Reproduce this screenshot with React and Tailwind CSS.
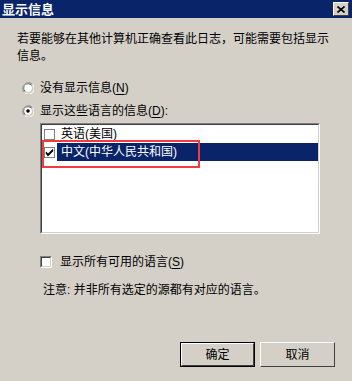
import React from 'react'

const cjk = { fontFamily: '"Liberation Sans", "Noto Sans CJK SC", sans-serif' }

const Radio = ({ checked }) => (
  <svg width="12" height="12" viewBox="0 0 12 12" className="shrink-0">
    <path d="M10.5 2.5 A5.5 5.5 0 0 0 2.5 10.5" fill="none" stroke="#808080" strokeWidth="1" />
    <path d="M9.6 3.4 A4.3 4.3 0 0 0 3.4 9.6" fill="none" stroke="#404040" strokeWidth="1" />
    <path d="M10.5 2.5 A5.5 5.5 0 0 1 2.5 10.5" fill="none" stroke="#ffffff" strokeWidth="1" />
    <path d="M9.6 3.4 A4.3 4.3 0 0 1 3.4 9.6" fill="none" stroke="#d4d0c8" strokeWidth="1" />
    <circle cx="6" cy="6" r="3.8" fill="#ffffff" />
    {checked && <circle cx="6" cy="6" r="1.8" fill="#000000" />}
  </svg>
)

const Check = () => (
  <svg width="9" height="9" viewBox="0 0 9 9">
    <path d="M1 4 L3 6.5 L8 1.5 M1 5 L3 7.5 L8 2.5" fill="none" stroke="#000" strokeWidth="1.2" />
  </svg>
)

const U = ({ children }) => <span className="underline underline-offset-2">{children}</span>

const Button = ({ children, primary }) => (
  <div className={primary ? 'border border-black' : ''}>
    <div
      className={
        'flex items-center justify-center border border-t-white border-l-white border-r-[#404040] border-b-[#404040] bg-[#d4d0c8] text-[12px] text-black ' +
        (primary ? 'w-[73px] h-[23px]' : 'w-[75px] h-[25px]')
      }
    >
      {children}
    </div>
  </div>
)

export default function App() {
  return (
    <div className="w-[352px] h-[381px] bg-[#d4d0c8] flex flex-col text-black" style={cjk}>
      <div className="h-[18px] bg-[#0a246a] flex items-center justify-between pl-[2px] pr-[3px]">
        <span className="text-[13px] font-bold text-white leading-none">显示信息</span>
        <div className="w-[16px] h-[14px] bg-[#d4d0c8] border border-t-white border-l-white border-r-[#404040] border-b-[#404040] flex items-center justify-center">
          <svg width="8" height="7" viewBox="0 0 8 7">
            <path d="M0.5 0.5 L7.5 6.5 M7.5 0.5 L0.5 6.5" stroke="#000" strokeWidth="1.6" />
          </svg>
        </div>
      </div>

      <div className="flex flex-col pl-[17px] pr-[17px]">
        <p className="mt-[13px] w-[318px] text-[12px] leading-[17px]">
          若要能够在其他计算机正确查看此日志，可能需要包括显示信息。
        </p>

        <div className="mt-[15px] h-[16px] flex items-center gap-[6px] pl-[5px] text-[12px]">
          <Radio />
          <span>没有显示信息(<U>N</U>)</span>
        </div>
        <div className="mt-[7px] h-[16px] flex items-center gap-[6px] pl-[5px] text-[12px]">
          <Radio checked />
          <span>显示这些语言的信息(<U>D</U>):</span>
        </div>

        <div className="relative mt-[4px] ml-[23px] w-[280px] h-[111px] border border-t-[#808080] border-l-[#808080] border-r-white border-b-white">
          <div className="h-full border border-t-[#404040] border-l-[#404040] border-r-[#d4d0c8] border-b-[#d4d0c8] bg-white">
            <div className="h-[18px] flex items-center text-[12px]">
              <div className="ml-[2px] w-[11px] h-[11px] border border-[#808080] bg-white" />
              <span className="ml-[2px] px-[4px]">英语(美国)</span>
            </div>
            <div className="h-[18px] flex items-center text-[12px]">
              <div className="ml-[2px] w-[11px] h-[11px] border border-[#808080] bg-white flex items-center justify-center">
                <Check />
              </div>
              <span className="ml-[2px] flex-1 h-full flex items-center px-[4px] bg-[#0a246a] text-white">
                中文(中华人民共和国)
              </span>
            </div>
          </div>
          <div className="absolute left-[1px] top-[16px] w-[158px] h-[28px] border-2 border-[#f03c3c]" />
        </div>

        <div className="mt-[20px] ml-[23px] h-[16px] flex items-center gap-[8px] text-[12px]">
          <div className="w-[12px] h-[12px] border border-t-[#808080] border-l-[#808080] border-r-white border-b-white">
            <div className="w-full h-full border border-t-[#404040] border-l-[#404040] border-r-[#d4d0c8] border-b-[#d4d0c8] bg-white" />
          </div>
          <span>显示所有可用的语言(<U>S</U>)</span>
        </div>

        <p className="mt-[12px] ml-[26px] h-[16px] text-[12px] leading-[16px]">
          注意: 并非所有选定的源都有对应的语言。
        </p>

        <div className="mt-[44px] flex justify-end gap-[5px]">
          <Button primary>确定</Button>
          <Button>取消</Button>
        </div>
      </div>
    </div>
  )
}
